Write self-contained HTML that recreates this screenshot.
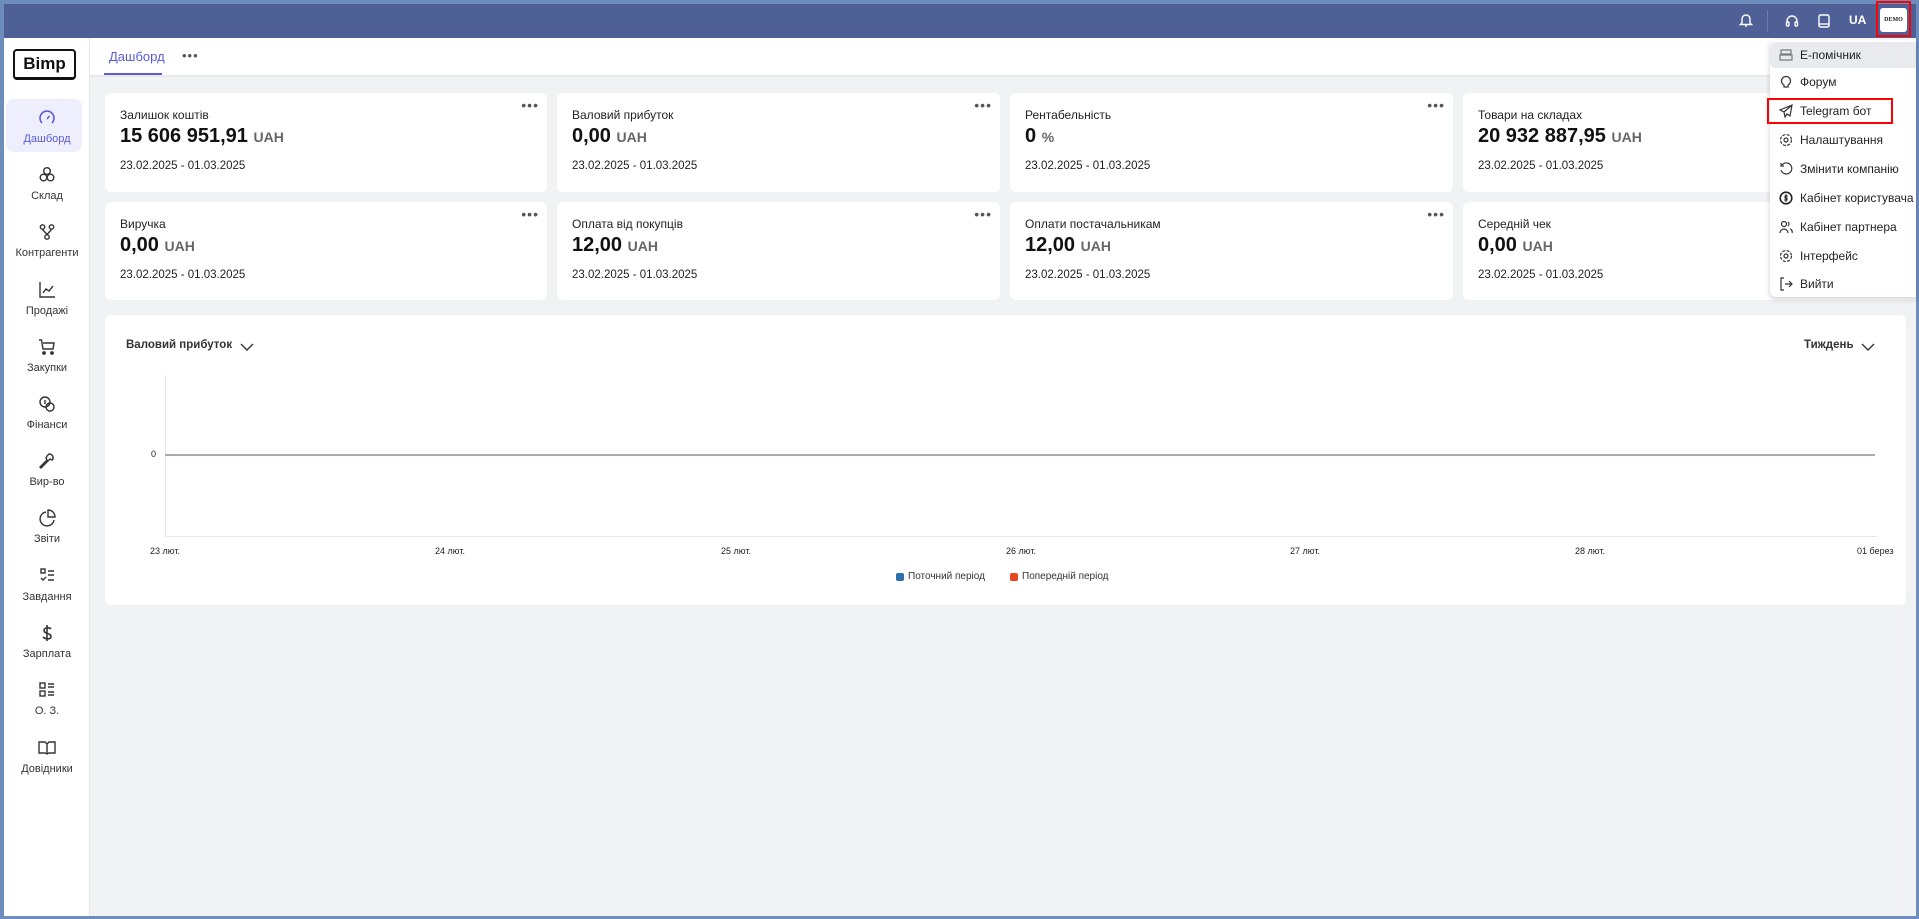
<!DOCTYPE html>
<html><head><meta charset="utf-8">
<style>
*{box-sizing:border-box;margin:0;padding:0}
body{width:1919px;height:919px;overflow:hidden;background:#6d8dbb;font-family:"Liberation Sans",sans-serif;color:#222;position:relative}
.top{position:absolute;left:4px;top:4px;width:1912px;height:34px;background:#4e6096}
.side{position:absolute;left:4px;top:38px;width:86px;height:878px;background:#fff;border-right:1px solid #e4e6ea}
.main{position:absolute;left:90px;top:38px;width:1826px;height:878px;background:#f1f2f4}
.tabs{position:absolute;left:0;top:0;width:1826px;height:39px;background:#fff;border-bottom:2px solid #e6e8eb}
.abs{position:absolute}
.card{position:absolute;background:#fff;border-radius:6px}
.ct{position:absolute;left:15px;top:15px;font-size:12px;color:#222}
.cv{position:absolute;left:15px;top:32px;font-size:20px;font-weight:bold;color:#111}
.cv span{font-size:14px;color:#666}
.cd{position:absolute;left:15px;top:67px;font-size:11.5px;color:#222}
.dots{position:absolute;right:8px;top:4px;font-size:14px;color:#555;letter-spacing:1px}
.si{position:absolute;left:0;width:86px;text-align:center;font-size:11px;color:#333}
.si svg{display:block;margin:0 auto 6px}
.menu{position:absolute;left:1770px;top:40px;width:146px;height:257px;background:#fff;border-radius:6px 0 0 6px;box-shadow:0 2px 6px rgba(0,0,0,.2)}
.mi{position:absolute;left:0;width:146px;height:26px;font-size:12px;color:#222;padding-left:30px;line-height:26px;white-space:nowrap}
.mi svg{position:absolute;left:9px;top:6px}
.xl{position:absolute;font-size:9px;color:#222}
</style></head><body>
<div class="top">
 <svg class="abs" style="left:1735px;top:8px" width="14" height="16" viewBox="0 0 14 16" fill="none" stroke="#fff" stroke-width="1.4"><path d="M3 11V7a4 4 0 018 0v4l1.5 1.5h-11z"/><path d="M6 14h2"/></svg>
 <div class="abs" style="left:1763px;top:6px;width:1px;height:22px;background:#6c7cad"></div>
 <svg class="abs" style="left:1780px;top:9px" width="16" height="16" viewBox="0 0 16 16" fill="none" stroke="#fff" stroke-width="1.4"><path d="M3 10V8a5 5 0 0110 0v2"/><rect x="2.5" y="9" width="2.5" height="4" rx="1"/><rect x="11" y="9" width="2.5" height="4" rx="1"/></svg>
 <svg class="abs" style="left:1813px;top:9px" width="14" height="16" viewBox="0 0 14 16" fill="none" stroke="#fff" stroke-width="1.4"><rect x="2" y="2" width="10" height="12" rx="1.5"/><path d="M2 11h10"/></svg>
 <div class="abs" style="left:1845px;top:9px;color:#fff;font-weight:bold;font-size:12px">UA</div>
 <div class="abs" style="left:1872px;top:-3px;width:35px;height:36px;border:2px solid #f00"></div>
 <div class="abs" style="left:1876px;top:4px;width:27px;height:24px;background:#fff;border-radius:3px;font-size:6px;font-weight:bold;text-align:center;line-height:24px;font-family:'Liberation Serif',serif">DEMO</div>
</div>
<div class="side">
 <div class="abs" style="left:9px;top:11px;width:63px;height:31px;border:2px solid #111;border-bottom-width:3px;border-radius:4px;font-weight:bold;font-size:17px;text-align:center;line-height:26px;color:#111">Bimp</div>
 <div class="abs" style="left:2px;top:61px;width:76px;height:53px;background:#eeeefc;border-radius:8px"></div>
 <div class="si" style="top:71px;color:#5b5bd6"><svg width="18" height="18" viewBox="0 0 18 18" fill="none" stroke="#5b5bd6" stroke-width="1.6"><path d="M4 14a7 7 0 1110 0"/><path d="M9 10l2.5-3"/></svg>Дашборд</div>
 <div class="si" style="top:128px"><svg width="18" height="18" viewBox="0 0 18 18" fill="none" stroke="#333" stroke-width="1.4"><circle cx="9" cy="5" r="3.3"/><circle cx="5.5" cy="11.5" r="3.3"/><circle cx="12.5" cy="11.5" r="3.3"/></svg>Склад</div>
 <div class="si" style="top:185px"><svg width="18" height="18" viewBox="0 0 18 18" fill="none" stroke="#333" stroke-width="1.4"><circle cx="4.5" cy="4" r="2.2"/><circle cx="13.5" cy="4" r="2.2"/><circle cx="9" cy="14" r="2.2"/><path d="M4.5 6.5l4.5 5M13.5 6.5L9 11.5"/></svg>Контрагенти</div>
 <div class="si" style="top:243px"><svg width="18" height="18" viewBox="0 0 18 18" fill="none" stroke="#333" stroke-width="1.4"><path d="M2 1v15h15"/><path d="M5 12l3-4 3 2 4-5"/></svg>Продажі</div>
 <div class="si" style="top:300px"><svg width="18" height="18" viewBox="0 0 18 18" fill="none" stroke="#333" stroke-width="1.4"><path d="M1 2h2.5l1.5 9h10l1-6H5"/><circle cx="6" cy="15" r="1.2" fill="#333"/><circle cx="14" cy="15" r="1.2" fill="#333"/></svg>Закупки</div>
 <div class="si" style="top:357px"><svg width="18" height="18" viewBox="0 0 18 18" fill="none" stroke="#333" stroke-width="1.4"><circle cx="7" cy="7" r="5"/><circle cx="12" cy="12" r="4"/><path d="M7 5v4"/></svg>Фінанси</div>
 <div class="si" style="top:414px"><svg width="18" height="18" viewBox="0 0 18 18" fill="none" stroke="#333" stroke-width="1.4"><path d="M11 2a4 4 0 014 5l-1 1-2-1-2 2L3 16l-1-1 7-7-1-2 1-2z"/></svg>Вир-во</div>
 <div class="si" style="top:471px"><svg width="18" height="18" viewBox="0 0 18 18" fill="none" stroke="#333" stroke-width="1.4"><path d="M8 3a7 7 0 108 8"/><path d="M10 1v7h7a7 7 0 00-7-7z"/></svg>Звіти</div>
 <div class="si" style="top:529px"><svg width="18" height="18" viewBox="0 0 18 18" fill="none" stroke="#333" stroke-width="1.4"><rect x="3" y="2" width="4" height="4"/><path d="M3 11l2 2 3-3M10 4h6M10 8h6M10 13h6"/></svg>Завдання</div>
 <div class="si" style="top:586px"><svg width="18" height="18" viewBox="0 0 18 18" fill="none" stroke="#333" stroke-width="1.6"><path d="M13 5c-1-1.5-7-2-7 1.5S13 9 13 12.5 7 15 5 13M9 1v16"/></svg>Зарплата</div>
 <div class="si" style="top:643px"><svg width="18" height="18" viewBox="0 0 18 18" fill="none" stroke="#333" stroke-width="1.4"><rect x="2" y="2" width="5" height="5"/><rect x="2" y="10" width="5" height="5"/><path d="M10 3h6M10 6h6M10 11h6M10 14h6"/></svg>О. З.</div>
 <div class="si" style="top:701px"><svg width="18" height="18" viewBox="0 0 18 18" fill="none" stroke="#333" stroke-width="1.4"><path d="M1 3h6l2 2 2-2h6v11h-6l-2 1-2-1H1zM9 5v10"/></svg>Довідники</div>
</div>
<div class="main">
 <div class="tabs">
  <div class="abs" style="left:19px;top:11px;font-size:13px;color:#5b5bd6">Дашборд</div>
  <div class="abs" style="left:14px;top:35px;width:58px;height:2px;background:#5b5bd6"></div>
  <div class="abs" style="left:92px;top:10px;font-size:13px;color:#555;letter-spacing:1px">•••</div>
 </div>
 <div class="card" style="left:15px;top:55px;width:442px;height:99px"><div class="dots">•••</div><div class="ct">Залишок коштів</div><div class="cv">15 606 951,91 <span>UAH</span></div><div class="cd">23.02.2025 - 01.03.2025</div></div>
 <div class="card" style="left:467px;top:55px;width:443px;height:99px"><div class="dots">•••</div><div class="ct">Валовий прибуток</div><div class="cv">0,00 <span>UAH</span></div><div class="cd">23.02.2025 - 01.03.2025</div></div>
 <div class="card" style="left:920px;top:55px;width:443px;height:99px"><div class="dots">•••</div><div class="ct">Рентабельність</div><div class="cv">0 <span>%</span></div><div class="cd">23.02.2025 - 01.03.2025</div></div>
 <div class="card" style="left:1373px;top:55px;width:453px;height:99px"><div class="ct">Товари на складах</div><div class="cv">20 932 887,95 <span>UAH</span></div><div class="cd">23.02.2025 - 01.03.2025</div></div>
 <div class="card" style="left:15px;top:164px;width:442px;height:98px"><div class="dots">•••</div><div class="ct">Виручка</div><div class="cv">0,00 <span>UAH</span></div><div class="cd">23.02.2025 - 01.03.2025</div></div>
 <div class="card" style="left:467px;top:164px;width:443px;height:98px"><div class="dots">•••</div><div class="ct">Оплата від покупців</div><div class="cv">12,00 <span>UAH</span></div><div class="cd">23.02.2025 - 01.03.2025</div></div>
 <div class="card" style="left:920px;top:164px;width:443px;height:98px"><div class="dots">•••</div><div class="ct">Оплати постачальникам</div><div class="cv">12,00 <span>UAH</span></div><div class="cd">23.02.2025 - 01.03.2025</div></div>
 <div class="card" style="left:1373px;top:164px;width:453px;height:98px"><div class="ct">Середній чек</div><div class="cv">0,00 <span>UAH</span></div><div class="cd">23.02.2025 - 01.03.2025</div></div>
 <div class="card" style="left:15px;top:277px;width:1801px;height:290px">
  <div class="abs" style="left:21px;top:24px;font-size:11.5px;font-weight:bold;color:#333">Валовий прибуток</div>
  <svg class="abs" style="left:135px;top:28px" width="14" height="9" viewBox="0 0 14 9" fill="none" stroke="#333" stroke-width="1.4"><path d="M1 1l6 6 6-6"/></svg>
  <div class="abs" style="left:1699px;top:24px;font-size:11.5px;font-weight:bold;color:#333">Тиждень</div>
  <svg class="abs" style="left:1756px;top:28px" width="14" height="9" viewBox="0 0 14 9" fill="none" stroke="#333" stroke-width="1.4"><path d="M1 1l6 6 6-6"/></svg>
 </div>
 <div class="abs" style="left:75px;top:337px;width:1px;height:162px;background:#e3e6ea"></div>
 <div class="abs" style="left:75px;top:498px;width:1712px;height:1px;background:#e3e6ea"></div>
 <div class="abs" style="left:75px;top:416px;width:1710px;height:2px;background:#b3a6ae"></div>
 <div class="abs" style="left:61px;top:411px;font-size:9px">0</div>
 <div class="xl" style="left:60px;top:508px">23 лют.</div>
 <div class="xl" style="left:345px;top:508px">24 лют.</div>
 <div class="xl" style="left:631px;top:508px">25 лют.</div>
 <div class="xl" style="left:916px;top:508px">26 лют.</div>
 <div class="xl" style="left:1200px;top:508px">27 лют.</div>
 <div class="xl" style="left:1485px;top:508px">28 лют.</div>
 <div class="xl" style="left:1767px;top:508px">01 берез</div>
 <div class="abs" style="left:806px;top:535px;width:8px;height:8px;background:#2f6fb0;border-radius:2px"></div>
 <div class="abs" style="left:818px;top:533px;font-size:10px;color:#333">Поточний період</div>
 <div class="abs" style="left:920px;top:535px;width:8px;height:8px;background:#e8451e;border-radius:2px"></div>
 <div class="abs" style="left:932px;top:533px;font-size:10px;color:#333">Попередній період</div>
</div>
<div class="menu">
 <div class="mi" style="top:2px;background:#e9eaed;border-radius:6px 0 0 6px"><svg width="14" height="14" viewBox="0 0 14 14" fill="none" stroke="#777" stroke-width="1.2"><rect x="2" y="2" width="10" height="4"/><rect x="1" y="7" width="12" height="5"/></svg>Е-помічник</div>
 <div class="mi" style="top:29px"><svg width="14" height="14" viewBox="0 0 14 14" fill="none" stroke="#333" stroke-width="1.2"><path d="M5 10a4.5 4.5 0 114 0v2H5z"/></svg>Форум</div>
 <div class="mi" style="top:58px"><svg width="14" height="14" viewBox="0 0 14 14" fill="none" stroke="#333" stroke-width="1.2"><path d="M13 1L1 6l4 2 1 5 2-3 3 2z M5 8l8-7"/></svg>Telegram бот</div>
 <div class="mi" style="top:87px"><svg width="14" height="14" viewBox="0 0 14 14" fill="none" stroke="#333" stroke-width="1.2"><circle cx="7" cy="7" r="2"/><circle cx="7" cy="7" r="5.5" stroke-dasharray="3 1.4"/></svg>Налаштування</div>
 <div class="mi" style="top:116px"><svg width="14" height="14" viewBox="0 0 14 14" fill="none" stroke="#333" stroke-width="1.2"><path d="M3 3a5.5 5.5 0 11-1 5M2 1v3h3"/></svg>Змінити компанію</div>
 <div class="mi" style="top:145px"><svg width="14" height="14" viewBox="0 0 14 14" fill="none" stroke="#222" stroke-width="1.6"><circle cx="7" cy="7" r="5.8"/><path d="M9 5H6v2h2v2H5M7 3v8" stroke-width="1"/></svg>Кабінет користувача</div>
 <div class="mi" style="top:174px"><svg width="14" height="14" viewBox="0 0 14 14" fill="none" stroke="#333" stroke-width="1.2"><circle cx="5" cy="4" r="2.5"/><path d="M1 13a4 4 0 018 0M9 2a2.5 2.5 0 010 4M11 9a3 3 0 012 4"/></svg>Кабінет партнера</div>
 <div class="mi" style="top:203px"><svg width="14" height="14" viewBox="0 0 14 14" fill="none" stroke="#333" stroke-width="1.2"><circle cx="7" cy="7" r="2"/><circle cx="7" cy="7" r="5.5" stroke-dasharray="3 1.4"/></svg>Інтерфейс</div>
 <div class="mi" style="top:231px"><svg width="14" height="14" viewBox="0 0 14 14" fill="none" stroke="#333" stroke-width="1.2"><path d="M5 1H2v12h3M6 7h7M10 4l3 3-3 3"/></svg>Вийти</div>
</div>
<div class="abs" style="left:1767px;top:98px;width:126px;height:26px;border:2px solid #f00"></div>
</body></html>
